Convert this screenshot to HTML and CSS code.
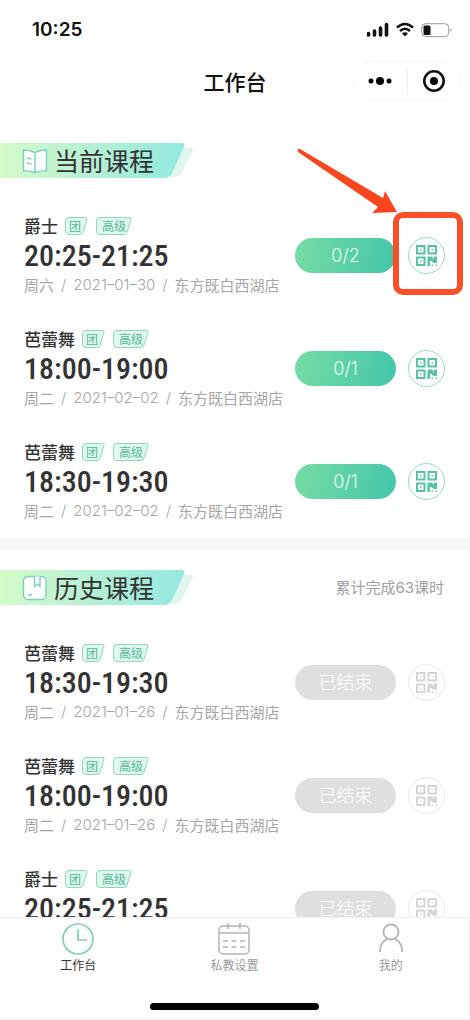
FILE: index.html
```html
<!DOCTYPE html>
<html lang="zh-CN">
<head>
<meta charset="utf-8">
<meta name="viewport" content="width=device-width, initial-scale=1">
<title>工作台</title>
<link rel="stylesheet" href="styles.css">
</head>
<body>
<svg class="sprite" aria-hidden="true">
  <symbol id="qr" viewBox="0 0 21 21">
    <path d="M1 1h7.500v7.500H1zM12.500 1H20v7.500h-7.500zM1 12.500h7.500V20H1z" fill="none" stroke="currentColor" stroke-width="2"/>
    <path d="M4 4h1.500v1.500H4zM15.500 4H17v1.500h-1.500zM4 15.500h1.500V17H4zM11.500 11.500h4.500l2 2.500v-2.500h3V18h-3l-4-2.500V21h-2.500zM15.500 19.500H17V21h-1.500zM19.500 19.500H21V21h-1.500z" fill="currentColor"/>
  </symbol>
  <symbol id="tag-s" viewBox="0 0 23 18">
    <path d="M4 .5h16.500q2 0 1.400 2l-4 13q-.7 2-2.900 2H4q-3.500 0-3.500-3.500V4Q.5.5 4 .5z" fill="#e0f8ee" stroke="#8ed8bd"/>
  </symbol>
  <symbol id="tag-l" viewBox="0 0 36 18">
    <path d="M4 .5h29.500q2 0 1.400 2l-4 13q-.7 2-2.900 2H4q-3.500 0-3.500-3.500V4Q.5.5 4 .5z" fill="#e0f8ee" stroke="#8ed8bd"/>
  </symbol>
  <symbol id="ribbon" viewBox="0 0 194 35">
    <path d="M184 5h7q3 0 1.500 3l-11 22q-2.500 4-7 4h-6z" fill="#dff5ee"/>
    <path d="M0 0h181q5 0 3 4l-12 26q-2.500 5-8 5H0z" fill="url(#ribbon-fill)"/>
  </symbol>
  <defs>
    <linearGradient id="ribbon-fill">
      <stop offset="0" stop-color="#d5fbc8"/>
      <stop offset=".5" stop-color="#b5f0d6"/>
      <stop offset="1" stop-color="#93e9e0"/>
    </linearGradient>
  </defs>
</svg>

<div class="app">
  <header>
    <div class="status">
      <span>10:25</span>
      <svg class="status-icons" viewBox="0 0 86 16" aria-hidden="true">
        <path d="M1.500 11.500v1.500M7.500 9v4M13.500 6v7M19.500 2.500v10.500" stroke="#111" stroke-width="3.600" stroke-linecap="round"/>
        <path d="M30 5.500q8-7 16 0M33 9q5-4.500 10 0" fill="none" stroke="#111" stroke-width="2.600"/>
        <path d="M35 11.500q3-2.500 6 0l-3 3z" fill="#111"/>
        <rect x="54.700" y="1.700" width="27" height="13" rx="4" fill="none" stroke="#999"/>
        <rect x="56.500" y="3.500" width="7" height="9.500" rx="1.500" fill="#111"/>
        <path d="M83.500 6v4q2-2 0-4z" fill="#888"/>
      </svg>
    </div>
    <div class="nav">
      <h1>工作台</h1>
      <div class="capsule">
        <button type="button" aria-label="更多"><svg width="26" height="10" viewBox="0 0 26 10"><circle cx="4" cy="5" r="2.500"/><circle cx="13" cy="5" r="4"/><circle cx="22" cy="5" r="2.500"/></svg></button>
        <button type="button" aria-label="关闭"><svg width="24" height="24" viewBox="0 0 24 24"><circle cx="12" cy="12" r="9.700" fill="none" stroke="#111" stroke-width="2.600"/><circle cx="12" cy="12" r="4"/></svg></button>
      </div>
    </div>
  </header>

  <main>
    <section>
      <div class="section-head">
        <h2><svg class="ribbon" aria-hidden="true"><use href="#ribbon"/></svg>
          <svg class="head-icon" viewBox="0 0 26 26" fill="#fff" stroke="#79d3bb" stroke-width="1.400" aria-hidden="true"><path d="M1.500 2q6 0 11.500 2.500Q18.500 2 24.500 2v21q-6-.5-11.500 1.500-5.500-2-11.500-1.500zM13 4.500v20"/><path d="M5 10l4.500 1M5 15l4.500 1"/></svg>
          <span>当前课程</span></h2>
      </div>
      <ul>
        <li>
          <div class="info">
            <div class="name"><h3>爵士</h3><span class="tag"><svg width="23" height="18"><use href="#tag-s"/></svg><span>团</span></span><span class="tag wide"><svg width="36" height="18"><use href="#tag-l"/></svg><span>高级</span></span></div>
            <div class="time">20:25-21:25</div>
            <div class="meta"><span>周六</span><i>/</i><time>2021–01–30</time><i>/</i><span>东方既白西湖店</span></div>
          </div>
          <button type="button" class="pill">0/2</button>
          <button type="button" class="code" aria-label="二维码"><svg width="21" height="21"><use href="#qr"/></svg></button>
        </li>
        <li>
          <div class="info">
            <div class="name"><h3>芭蕾舞</h3><span class="tag"><svg width="23" height="18"><use href="#tag-s"/></svg><span>团</span></span><span class="tag wide"><svg width="36" height="18"><use href="#tag-l"/></svg><span>高级</span></span></div>
            <div class="time">18:00-19:00</div>
            <div class="meta"><span>周二</span><i>/</i><time>2021–02–02</time><i>/</i><span>东方既白西湖店</span></div>
          </div>
          <button type="button" class="pill">0/1</button>
          <button type="button" class="code" aria-label="二维码"><svg width="21" height="21"><use href="#qr"/></svg></button>
        </li>
        <li>
          <div class="info">
            <div class="name"><h3>芭蕾舞</h3><span class="tag"><svg width="23" height="18"><use href="#tag-s"/></svg><span>团</span></span><span class="tag wide"><svg width="36" height="18"><use href="#tag-l"/></svg><span>高级</span></span></div>
            <div class="time">18:30-19:30</div>
            <div class="meta"><span>周二</span><i>/</i><time>2021–02–02</time><i>/</i><span>东方既白西湖店</span></div>
          </div>
          <button type="button" class="pill">0/1</button>
          <button type="button" class="code" aria-label="二维码"><svg width="21" height="21"><use href="#qr"/></svg></button>
        </li>
      </ul>
    </section>

    <section class="history">
      <div class="section-head">
        <h2><svg class="ribbon" aria-hidden="true"><use href="#ribbon"/></svg>
          <svg class="head-icon" viewBox="0 0 26 26" fill="#fff" stroke="#79d3bb" stroke-width="1.400" aria-hidden="true"><rect x="1.500" y="1.500" width="22.500" height="23" rx="4"/><path d="M12.500 1.500v10l2.800-2.500 2.700 2.500v-10M6 20h4"/></svg>
          <span>历史课程</span></h2>
        <span class="total">累计完成63课时</span>
      </div>
      <ul>
        <li>
          <div class="info">
            <div class="name"><h3>芭蕾舞</h3><span class="tag"><svg width="23" height="18"><use href="#tag-s"/></svg><span>团</span></span><span class="tag wide"><svg width="36" height="18"><use href="#tag-l"/></svg><span>高级</span></span></div>
            <div class="time">18:30-19:30</div>
            <div class="meta"><span>周二</span><i>/</i><time>2021–01–26</time><i>/</i><span>东方既白西湖店</span></div>
          </div>
          <button type="button" class="pill" disabled>已结束</button>
          <button type="button" class="code" aria-label="二维码" disabled><svg width="21" height="21"><use href="#qr"/></svg></button>
        </li>
        <li>
          <div class="info">
            <div class="name"><h3>芭蕾舞</h3><span class="tag"><svg width="23" height="18"><use href="#tag-s"/></svg><span>团</span></span><span class="tag wide"><svg width="36" height="18"><use href="#tag-l"/></svg><span>高级</span></span></div>
            <div class="time">18:00-19:00</div>
            <div class="meta"><span>周二</span><i>/</i><time>2021–01–26</time><i>/</i><span>东方既白西湖店</span></div>
          </div>
          <button type="button" class="pill" disabled>已结束</button>
          <button type="button" class="code" aria-label="二维码" disabled><svg width="21" height="21"><use href="#qr"/></svg></button>
        </li>
        <li>
          <div class="info">
            <div class="name"><h3>爵士</h3><span class="tag"><svg width="23" height="18"><use href="#tag-s"/></svg><span>团</span></span><span class="tag wide"><svg width="36" height="18"><use href="#tag-l"/></svg><span>高级</span></span></div>
            <div class="time">20:25-21:25</div>
          </div>
          <button type="button" class="pill" disabled>已结束</button>
          <button type="button" class="code" aria-label="二维码" disabled><svg width="21" height="21"><use href="#qr"/></svg></button>
        </li>
      </ul>
    </section>
  </main>

  <footer>
    <nav class="tabs">
      <a href="#" class="active" aria-current="page">
        <svg viewBox="0 0 34 34" fill="none" stroke="#7fcfb6" stroke-width="1.700" aria-hidden="true"><circle cx="17" cy="17" r="15"/><path d="M17 7v11h9"/></svg>
        工作台</a>
      <a href="#">
        <svg viewBox="0 0 34 34" fill="none" stroke="#b4b4b4" stroke-width="1.500" aria-hidden="true"><rect x="2" y="4" width="30" height="28" rx="4"/><path d="M2 11h30M11 1v6M23 1v6M6 19h5M14.500 19h5M23 19h5M6 25h5M14.500 25h5M23 25h5"/></svg>
        私教设置</a>
      <a href="#">
        <svg viewBox="0 0 34 34" fill="none" stroke="#b4b4b4" stroke-width="1.800" aria-hidden="true"><circle cx="17" cy="10" r="7.500"/><path d="M6 30v-2q0-7 7-11M28 30v-2q0-7-7-11"/></svg>
        我的</a>
    </nav>
    <div class="home"></div>
  </footer>

  <svg class="callout" viewBox="0 0 170 150" aria-hidden="true">
    <path d="M3 1l83 49 2-7 12 21-25 1 6-6L1 4q-1-4 2-3z" fill="#fa461e"/>
    <rect x="99" y="67" width="64" height="77" rx="7" fill="none" stroke="#fa461e" stroke-opacity=".95" stroke-width="6"/>
  </svg>
</div>
</body>
</html>
```

FILE: styles.css
```css
* { box-sizing: border-box; }
body {
  margin: 0;
  background: #fff;
  color: #333;
  font-family: "Noto Sans CJK SC", sans-serif;
}
h1, h2, h3, ul { margin: 0; padding: 0; font-weight: 400; }
ul { list-style: none; }
button { padding: 0; border: 0; background: none; font: inherit; }
svg { display: block; flex: none; }
.sprite { position: absolute; width: 0; height: 0; }

.app {
  position: relative;
  display: flex;
  flex-direction: column;
  height: 100vh;
  overflow: hidden;
}
.status {
  display: flex;
  align-items: center;
  justify-content: space-between;
  height: 59px;
  padding: 0 17px 0 32px;
  color: #111;
  font: 600 19px/24px Inter, sans-serif;
}
.status-icons { width: 86px; height: 16px; }
.nav {
  display: grid;
  grid-template-columns: 1fr auto 1fr;
  align-items: center;
  height: 44px;
  padding: 0 9px;
}
h1 { grid-column: 2; color: #111; font-size: 21px; line-height: 30px; font-weight: 500; }
.capsule {
  display: flex;
  align-items: center;
  justify-self: end;
  width: 108px;
  height: 40px;
  border: 1px solid #f6f6f6;
  border-radius: 20px;
}
.capsule button { display: flex; flex: 1; align-items: center; justify-content: center; height: 26px; }
.capsule button + button { border-left: 1px solid #eee; }

main { flex: 1; min-height: 0; overflow-y: auto; padding-top: 20px; scrollbar-width: none; }
section { padding: 20px 0 17px; }
.history { border-top: 12px solid #f7f7f7; }
.section-head { display: flex; align-items: center; justify-content: space-between; padding-right: 26px; }
h2 {
  position: relative;
  display: flex;
  align-items: center;
  gap: 6px;
  width: 194px;
  height: 35px;
  padding-left: 22px;
  font-size: 25px;
  line-height: 35px;
}
.ribbon { position: absolute; inset: 0; width: 194px; height: 35px; }
.head-icon { position: relative; width: 26px; height: 26px; }
h2 span { position: relative; }
.total { color: #a0a0a0; font: 400 15px/22px Inter, "Noto Sans CJK SC", sans-serif; }

ul { display: grid; gap: 33px; padding: 37px 25px 0 24px; }
li { display: flex; align-items: center; height: 80px; }
.info { flex: 1; align-self: flex-start; min-width: 0; white-space: nowrap; }
.name { display: flex; align-items: center; height: 22px; }
h3 { margin-right: 7px; font-size: 17px; line-height: 22px; font-weight: 500; }
.tag {
  display: grid;
  width: 23px;
  height: 18px;
  margin-right: 8px;
  color: #52b997;
  font-size: 12px;
  line-height: 18px;
}
.tag > * { grid-area: 1 / 1; }
.tag > span { padding-left: 4px; }
.wide { width: 36px; }
.wide > span { padding-left: 6px; }
.time { font: 500 30px/38px "Roboto Condensed", Roboto, sans-serif; }
.meta { display: flex; gap: 7px; color: #a6a6a6; font-size: 15px; line-height: 20px; }
.meta i, .meta time { font-family: Inter, sans-serif; font-style: normal; font-weight: 300; }
.pill {
  width: 101px;
  height: 35px;
  margin-right: 12px;
  border-radius: 18px;
  background: linear-gradient(100deg, #76dca5, #43c6a9);
  color: #e9fff6;
  font: 300 18px/35px Inter, "Noto Sans CJK SC", sans-serif;
}
.pill:disabled { background: #dfdfdf; color: #fff; }
.code {
  display: flex;
  align-items: center;
  justify-content: center;
  width: 37px;
  height: 37px;
  border: 1px solid #95d9c3;
  border-radius: 50%;
  color: #58c3a3;
}
.code:disabled { border-color: #e8e8e8; color: #d6d6d6; }

footer {
  display: flex;
  flex-direction: column;
  align-items: center;
  justify-content: space-between;
  height: 103px;
  padding: 4px 0 9px;
  border: 1px solid #f0f0f0;
  border-left: 0;
  background: #fff;
}
.tabs { display: flex; align-self: stretch; }
.tabs a {
  display: flex;
  flex: 1;
  flex-direction: column;
  align-items: center;
  color: #999;
  font-size: 12px;
  line-height: 18px;
  text-decoration: none;
}
.tabs .active { color: #333; }
.tabs svg { width: 34px; height: 34px; }
.home { width: 169px; height: 7px; border-radius: 4px; background: #000; }

.callout { position: absolute; top: 148px; right: 3px; width: 170px; height: 150px; pointer-events: none; }
```
